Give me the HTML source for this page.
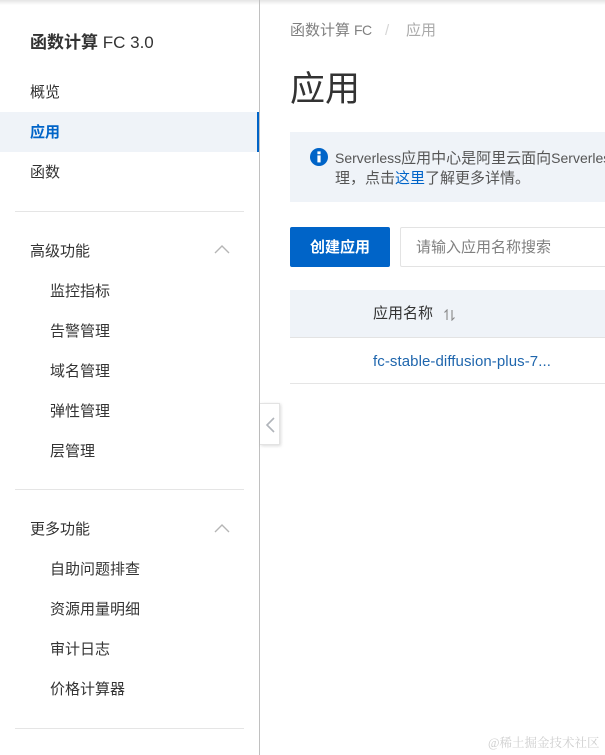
<!DOCTYPE html>
<html><head><meta charset="utf-8"><style>
*{box-sizing:border-box}
html,body{margin:0;padding:0;width:605px;height:755px;overflow:hidden;background:#fff}
body{position:relative;font-family:"Liberation Sans","Noto Sans CJK SC",sans-serif;color:#333;font-size:15px}
.a{position:absolute;white-space:nowrap;line-height:20px}
.l{position:absolute;background:#e5e5e5;height:1px;left:15px;width:229px}
.n{font-size:14px}
</style></head><body>
<div class="a" style="left:0;top:0;width:605px;height:5px;background:linear-gradient(#e4e4e4,#fff)"></div>
<div class="a" style="left:259px;top:0;width:1px;height:755px;background:#c0c0c0"></div>
<div class="a" style="left:30px;top:32px;font-size:17px;line-height:22px;font-weight:bold">函数计算 <span style="font-weight:normal;font-size:17px">FC 3.0</span></div>
<div class="a" style="left:30px;top:83px">概览</div>
<div class="a" style="left:0;top:112px;width:259px;height:40px;background:#eff3f8;border-right:2px solid #0064c8"></div>
<div class="a" style="left:30px;top:123px;color:#0064c8;font-weight:bold">应用</div>
<div class="a" style="left:30px;top:163px">函数</div>
<div class="l" style="top:211px"></div>
<div class="a" style="left:30px;top:242px">高级功能</div>
<svg class="a" style="left:214px;top:244px" width="16" height="11" viewBox="0 0 16 11"><path d="M1 9 L8 2 L15 9" fill="none" stroke="#b5b5b5" stroke-width="1.4"/></svg>
<div class="a" style="left:50px;top:282px">监控指标</div>
<div class="a" style="left:50px;top:322px">告警管理</div>
<div class="a" style="left:50px;top:362px">域名管理</div>
<div class="a" style="left:50px;top:402px">弹性管理</div>
<div class="a" style="left:50px;top:442px">层管理</div>
<div class="l" style="top:489px"></div>
<div class="a" style="left:30px;top:520px">更多功能</div>
<svg class="a" style="left:214px;top:523px" width="16" height="11" viewBox="0 0 16 11"><path d="M1 9 L8 2 L15 9" fill="none" stroke="#b5b5b5" stroke-width="1.4"/></svg>
<div class="a" style="left:50px;top:560px">自助问题排查</div>
<div class="a" style="left:50px;top:600px">资源用量明细</div>
<div class="a" style="left:50px;top:640px">审计日志</div>
<div class="a" style="left:50px;top:680px">价格计算器</div>
<div class="l" style="top:728px"></div>
<div class="a" style="left:260px;top:403px;width:20px;height:42px;background:#fff;border:1px solid #e3e3e3;border-left:0;box-shadow:1px 1px 3px rgba(0,0,0,.15)"></div>
<svg class="a" style="left:264px;top:416px" width="12" height="18" viewBox="0 0 12 18"><path d="M10 2 L3 9 L10 16" fill="none" stroke="#b0b4ba" stroke-width="1.6"/></svg>
<div class="a" style="left:290px;top:21px;color:#808080">函数计算</div>
<div class="a n" style="left:354px;top:20px;color:#808080;letter-spacing:-.6px">FC</div>
<div class="a" style="left:385px;top:21px;color:#d5d5d5">/</div>
<div class="a" style="left:406px;top:21px;color:#aaa">应用</div>
<div class="a" style="left:290px;top:67px;font-size:35px;line-height:46px;color:#333">应用</div>
<div class="a" style="left:290px;top:132px;width:315px;height:70px;background:#eff3f8"></div>
<svg class="a" style="left:310px;top:148px" width="18" height="18" viewBox="0 0 18 18"><circle cx="9" cy="9" r="9" fill="#0064c8"/><rect x="7.4" y="7.4" width="3.2" height="7" fill="#fff"/><rect x="7.4" y="3.4" width="3.2" height="2.8" fill="#fff"/></svg>
<div class="a" style="left:335px;top:148px;width:270px;overflow:hidden;color:#555"><span class="n">Serverless</span>应用中心是阿里云面向<span class="n">Serverless</span>应用</div>
<div class="a" style="left:335px;top:169px;color:#555">理，点击<span style="color:#0064c8">这里</span>了解更多详情。</div>
<div class="a" style="left:290px;top:227px;width:100px;height:40px;background:#0064c8;border-radius:2px;color:#fff;font-weight:bold;text-align:center;line-height:42px">创建应用</div>
<div class="a" style="left:400px;top:227px;width:210px;height:40px;border:1px solid #e3e3e3;border-radius:2px;color:#808080;line-height:40px;padding-left:15px">请输入应用名称搜索</div>
<div class="a" style="left:290px;top:290px;width:315px;height:48px;background:#eff3f8;border-bottom:1px solid #e3e3e3"></div>
<div class="a" style="left:373px;top:304px">应用名称</div>
<svg class="a" style="left:443px;top:309px" width="14" height="12" viewBox="0 0 14 12"><path d="M4 11 V1 L1.5 3.5 M9 1 V11 L11.5 8.5" fill="none" stroke="#888" stroke-width="1.1"/></svg>
<div class="a" style="left:373px;top:352px;color:#1f66ad;letter-spacing:.08px">fc-stable-diffusion-plus-7...</div>
<div class="a" style="left:290px;top:383px;width:315px;height:1px;background:#e5e5e5"></div>
<div class="a" style="left:488px;top:733px;font-size:12.5px;color:#cfcfcf;font-family:'Liberation Serif','Noto Serif CJK SC',serif">@稀土掘金技术社区</div>
</body></html>
